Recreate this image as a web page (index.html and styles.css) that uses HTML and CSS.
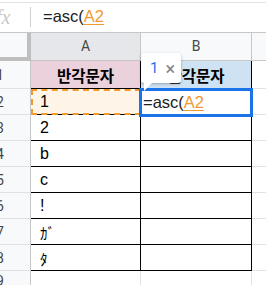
FILE: index.html
```html
<!DOCTYPE html>
<html>
<head>
<meta charset="utf-8">
<link rel="stylesheet" href="styles.css">
</head>
<body>
<div class="app">
  <div class="topline"></div>
  <div class="fbar">
    <span class="fx">fx</span>
    <span class="sep"></span>
    <span class="ftext">=asc(<span class="ref">A2</span></span>
  </div>
  <div class="sheet">
    <div class="corner"></div>
    <div class="colhead sel">A</div>
    <div class="colhead">B</div>
    <div class="colhead last"></div>

    <div class="rowhead"><span>1</span></div>
    <div class="cell a bd title pink">반각문자</div>
    <div class="cell b bd title blue">반각문자</div>
    <div class="cell c"></div>

    <div class="rowhead"><span>2</span></div>
    <div class="cell a bd src">1</div>
    <div class="cell b bd"></div>
    <div class="cell c"></div>

    <div class="rowhead"><span>3</span></div>
    <div class="cell a bd">2</div>
    <div class="cell b bd"></div>
    <div class="cell c"></div>

    <div class="rowhead"><span>4</span></div>
    <div class="cell a bd">b</div>
    <div class="cell b bd"></div>
    <div class="cell c"></div>

    <div class="rowhead"><span>5</span></div>
    <div class="cell a bd">c</div>
    <div class="cell b bd"></div>
    <div class="cell c"></div>

    <div class="rowhead"><span>6</span></div>
    <div class="cell a bd">!</div>
    <div class="cell b bd"></div>
    <div class="cell c"></div>

    <div class="rowhead"><span>7</span></div>
    <div class="cell a bd jp">ｶﾞ</div>
    <div class="cell b bd"></div>
    <div class="cell c"></div>

    <div class="rowhead"><span>8</span></div>
    <div class="cell a bd jp">ﾀ</div>
    <div class="cell b bd"></div>
    <div class="cell c"></div>

    <div class="rowhead"><span>9</span></div>
    <div class="cell a"></div>
    <div class="cell b"></div>
    <div class="cell c"></div>

    <div class="editor">=asc(<span class="ref">A2</span></div>
    <div class="tip"><span class="num">1</span><span class="x">×</span></div>
  </div>
</div>
</body>
</html>
```
FILE: styles.css
```css
* { box-sizing: border-box; }
html, body { margin: 0; padding: 0; background: #fff; }
body { width: 266px; height: 285px; overflow: hidden; font-family: "Liberation Sans", Arial, sans-serif; }
.app { width: 266px; height: 285px; overflow: hidden; position: relative; }
.topline { height: 3px; border-bottom: 1px solid #e3e3e3; }
.fbar { height: 30px; display: flex; align-items: center; border-bottom: 1px solid #c7c7c7; }
.fx { font-family: "Liberation Serif", serif; font-style: italic; font-size: 20px; color: #c8c8c8; margin-left: -4px; width: 34px; line-height: 1; margin-top: -2px; }
.sep { width: 1px; height: 20px; background: #cfcfcf; margin-top: -2px; }
.ftext { margin-left: 12px; font-size: 16.5px; color: #202124; margin-top: -3px; }
.ref { color: #f29a30; text-decoration: underline; text-underline-offset: 2px; text-decoration-thickness: 1px; }

.sheet { position: relative; display: grid; grid-template-columns: 31px 110px 111px 14px; grid-template-rows: 28px 28px repeat(7, 26px) 20px; }
.corner { background: #f8f9fa; border-right: 4px solid #bfbfbf; border-bottom: 4px solid #bfbfbf; }
.colhead { background: #f8f9fa; border-right: 1px solid #c7c7c7; border-bottom: 1px solid #c7c7c7; display: flex; align-items: center; justify-content: center; font-family: Roboto, "Liberation Sans", sans-serif; font-size: 14px; color: #444746; padding-bottom: 2px; }
.colhead.sel { background: #e5e7ea; }
.colhead.last { border-right: none; }
.rowhead { background: #f8f9fa; border-right: 1px solid #c7c7c7; border-bottom: 1px solid #e1e1e1; overflow: hidden; display: flex; align-items: center; font-family: Roboto, "Liberation Sans", sans-serif; font-size: 14px; color: #444746; }
.rowhead span { margin-left: -4px; }
.cell { border-right: 1px solid #e2e2e2; border-bottom: 1px solid #e2e2e2; display: flex; align-items: center; padding-left: 9px; font-size: 16px; color: #000; padding-top: 1px; }
.cell.bd { border-right-color: #000; border-bottom-color: #000; }
.cell.c { border-right: none; }
.cell.title { justify-content: center; padding-left: 0; font-weight: bold; font-family: "Noto Sans CJK KR", "Liberation Sans", sans-serif; font-size: 15.5px; }
.pink { background: #ead1dc; }
.blue { background: #cfe2f3; }
.jp { font-family: "Noto Sans CJK JP", sans-serif; font-size: 15px; }
.src { background: #fef4e8; outline: 2px dashed #f29a30; outline-offset: -2px; }

.editor { position: absolute; left: 139px; top: 55px; width: 114px; height: 29px; border: 3px solid #1a73e8; background: #fff; font-size: 16.5px; color: #202124; display: flex; align-items: center; padding-left: 1px; }
.tip { position: absolute; left: 141px; top: 20px; width: 40px; height: 30px; background: #fff; box-shadow: 0 1px 3px rgba(0,0,0,.28); border-radius: 3px; display: flex; align-items: center; font-family: Roboto, "Liberation Sans", sans-serif; font-size: 15px; padding-left: 9px; gap: 7px; }
.tip::after { content: ""; position: absolute; left: 3px; top: 30px; border-top: 8px solid #fff; border-right: 8px solid transparent; }
.num { color: #1a73e8; }
.x { color: #80868b; font-size: 18px; }
```
